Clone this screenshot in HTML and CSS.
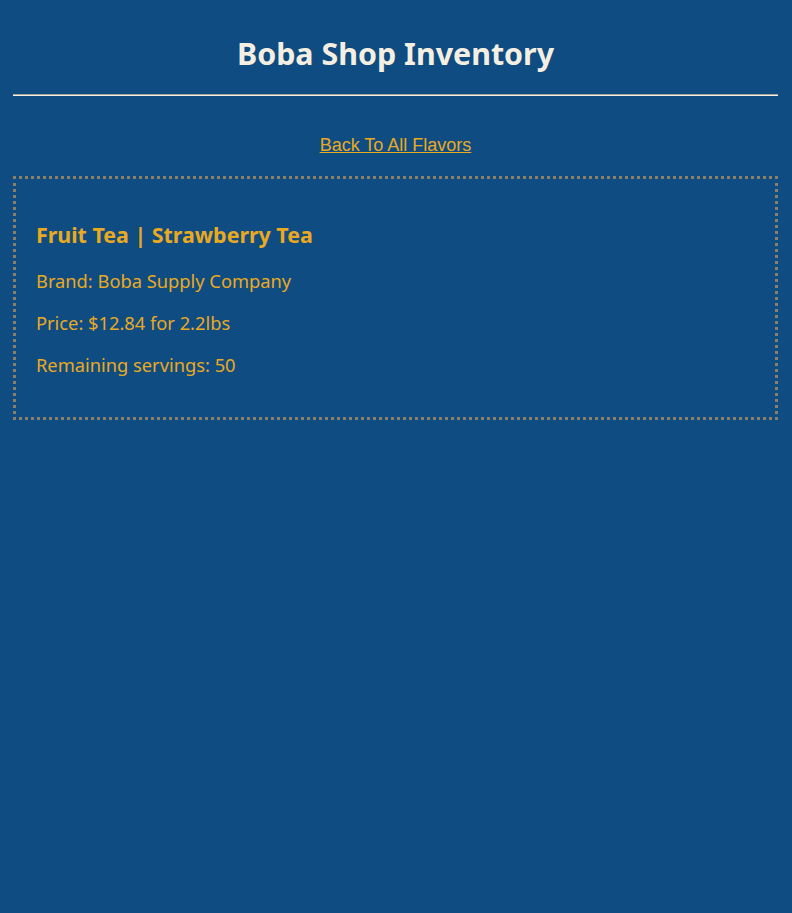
FILE: index.html
```html
<!DOCTYPE html>
<html lang="en">
<head>
<meta charset="utf-8">
<title>Boba Shop Inventory</title>
<link rel="stylesheet" href="styles.css">
</head>
<body>
  <header class="site-header">
    <h1 class="site-title">Boba Shop Inventory</h1>
    <hr class="divider">
  </header>
  <main class="content">
    <nav class="back-nav">
      <a class="back-link" href="#">Back To All Flavors</a>
    </nav>
    <section class="flavor-card">
      <h2 class="flavor-title">Fruit Tea | Strawberry Tea</h2>
      <p class="flavor-detail">Brand: Boba Supply Company</p>
      <p class="flavor-detail">Price: $12.84 for 2.2lbs</p>
      <p class="flavor-detail">Remaining servings: 50</p>
    </section>
  </main>
</body>
</html>
```
FILE: styles.css
```css
html, body {
  background: #0f4c81;
}
body {
  margin: 0;
  padding: 0 14px 0 13px;
  font-family: "Noto Sans", "DejaVu Sans", sans-serif;
  color: #e9a921;
}
.site-header {
  display: flex;
  flex-direction: column;
}
.site-title {
  margin: 35px 0 21px;
  font-size: 30.4px;
  line-height: 38px;
  font-weight: 700;
  text-align: center;
  color: #f5efe1;
}
.divider {
  margin: 0;
  height: 0;
  border: 0;
  border-top: 1px solid #a9a59b;
  border-bottom: 1px solid #f2efe6;
}
.back-nav {
  margin-top: 39px;
  text-align: center;
  line-height: 21px;
}
.back-link {
  font-family: "Liberation Sans", Arial, sans-serif;
  font-size: 18px;
  color: #e9a921;
  text-decoration: underline;
}
.flavor-card {
  margin-top: 20px;
  border: 3px dotted #8c7f68;
  padding: 43px 20px 41px;
}
.flavor-title {
  margin: 0 0 22px;
  font-size: 21.4px;
  line-height: 26px;
  font-weight: 700;
}
.flavor-detail {
  margin: 0 0 20px;
  font-size: 18.3px;
  line-height: 22px;
}
.flavor-detail:last-child {
  margin-bottom: 0;
}
```
